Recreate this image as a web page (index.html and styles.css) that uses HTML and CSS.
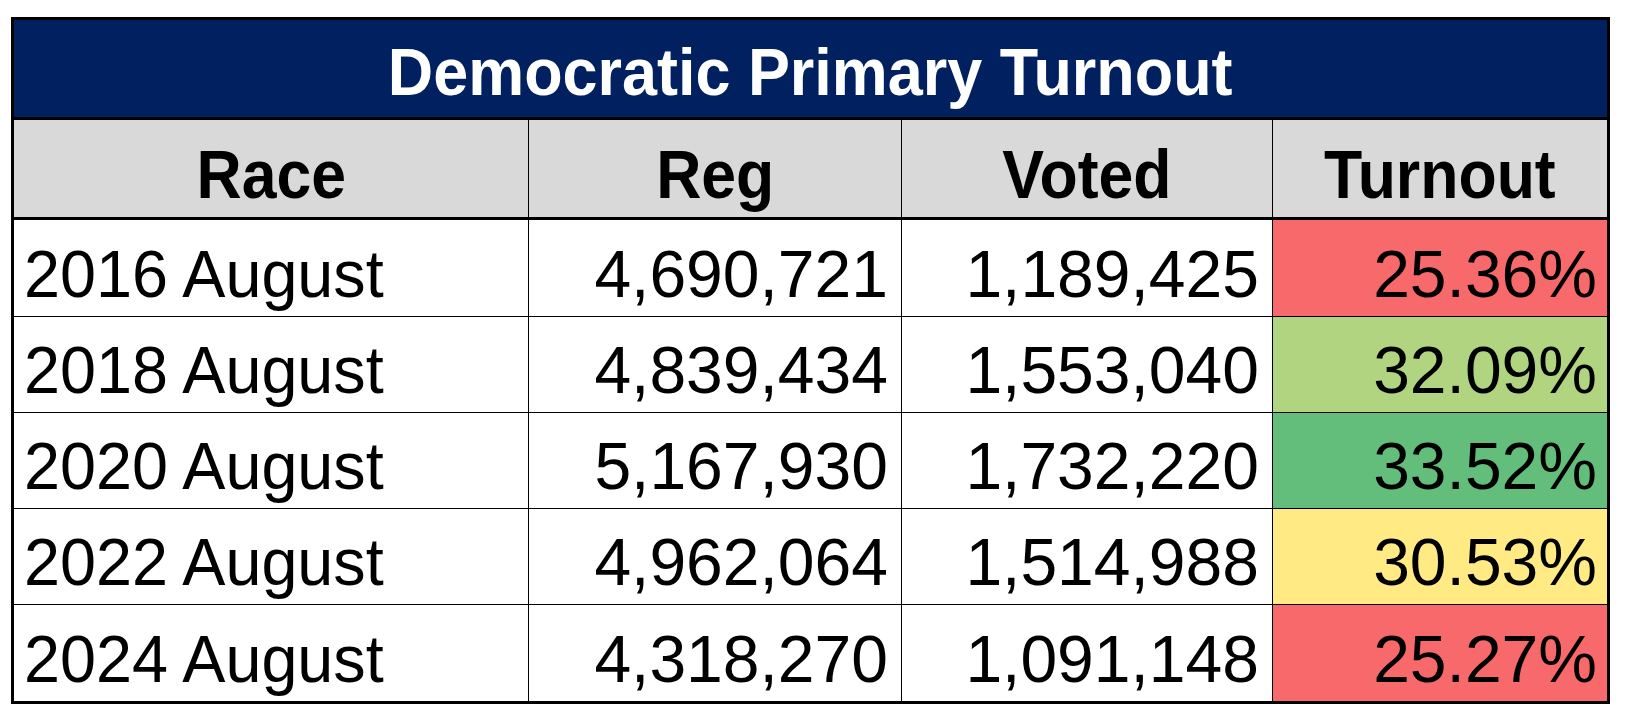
FILE: index.html
```html
<!DOCTYPE html>
<html lang="en">
<head>
<meta charset="utf-8">
<title>Democratic Primary Turnout</title>
<link rel="stylesheet" href="styles.css">
</head>
<body>
<div class="sheet">
  <div class="title"><span class="narrow-c">Democratic Primary Turnout</span></div>
  <div class="grid head">
    <div class="cell hcell"><span class="hnarrow">Race</span></div>
    <div class="cell hcell"><span class="hnarrow">Reg</span></div>
    <div class="cell hcell"><span class="hnarrow">Voted</span></div>
    <div class="cell hcell"><span class="hnarrow">Turnout</span></div>
  </div>
  <div class="body">
    <div class="grid row">
      <div class="cell label"><span class="lnarrow">2016 August</span></div>
      <div class="cell num">4,690,721</div>
      <div class="cell num">1,189,425</div>
      <div class="cell num pct red">25.36%</div>
    </div>
    <div class="grid row">
      <div class="cell label"><span class="lnarrow">2018 August</span></div>
      <div class="cell num">4,839,434</div>
      <div class="cell num">1,553,040</div>
      <div class="cell num pct lgreen">32.09%</div>
    </div>
    <div class="grid row">
      <div class="cell label"><span class="lnarrow">2020 August</span></div>
      <div class="cell num">5,167,930</div>
      <div class="cell num">1,732,220</div>
      <div class="cell num pct green">33.52%</div>
    </div>
    <div class="grid row">
      <div class="cell label"><span class="lnarrow">2022 August</span></div>
      <div class="cell num">4,962,064</div>
      <div class="cell num">1,514,988</div>
      <div class="cell num pct yellow">30.53%</div>
    </div>
    <div class="grid row">
      <div class="cell label"><span class="lnarrow">2024 August</span></div>
      <div class="cell num">4,318,270</div>
      <div class="cell num">1,091,148</div>
      <div class="cell num pct red">25.27%</div>
    </div>
  </div>
</div>
</body>
</html>
```

FILE: styles.css
```css
html, body {
  margin: 0;
  padding: 0;
  background: #ffffff;
}

body {
  font-family: "Liberation Sans", Arial, sans-serif;
  color: #000;
}

.sheet {
  margin: 17px 0 0 11px;
  width: 1593px;
  border: 3px solid #000;
  background: #000;
}

.title {
  height: 100px;
  background: #002060;
  color: #fff;
  font-weight: bold;
  font-size: 66px;
  line-height: 66px;
  display: flex;
  align-items: flex-end;
  justify-content: center;
  box-sizing: border-box;
  padding-bottom: 12px;
  border-bottom: 3px solid #000;
}

.narrow-c {
  display: inline-block;
  white-space: nowrap;
  transform: scaleX(0.953);
  transform-origin: center bottom;
}

.grid {
  display: grid;
  grid-template-columns: 514px 372px 370px 334px;
  column-gap: 1px;
  background: #000;
}

.head {
  height: 100px;
  box-sizing: border-box;
  border-bottom: 3px solid #000;
}

.body {
  display: flex;
  flex-direction: column;
  row-gap: 1px;
  background: #000;
}

.row {
  height: 95px;
}

.row:first-child,
.row:last-child {
  height: 96px;
}

.cell {
  display: flex;
  align-items: flex-end;
  background: #fff;
  line-height: 66px;
  box-sizing: border-box;
}

.hcell {
  background: #d9d9d9;
  justify-content: center;
  font-weight: bold;
  font-size: 68px;
  padding-bottom: 10px;
}

.hnarrow {
  display: inline-block;
  white-space: nowrap;
  transform: scaleX(0.92);
  transform-origin: center bottom;
}

.label {
  font-size: 66px;
  padding-left: 10px;
  padding-bottom: 9px;
}

.lnarrow {
  display: inline-block;
  white-space: nowrap;
  transform: scaleX(0.98);
  transform-origin: left bottom;
}

.num {
  font-size: 66px;
  justify-content: flex-end;
  padding-right: 13px;
  padding-bottom: 9px;
}

.pct {
  padding-right: 10px;
}

.red { background: #f8696b; }
.lgreen { background: #b0d47f; }
.green { background: #63be7b; }
.yellow { background: #ffea84; }
```
